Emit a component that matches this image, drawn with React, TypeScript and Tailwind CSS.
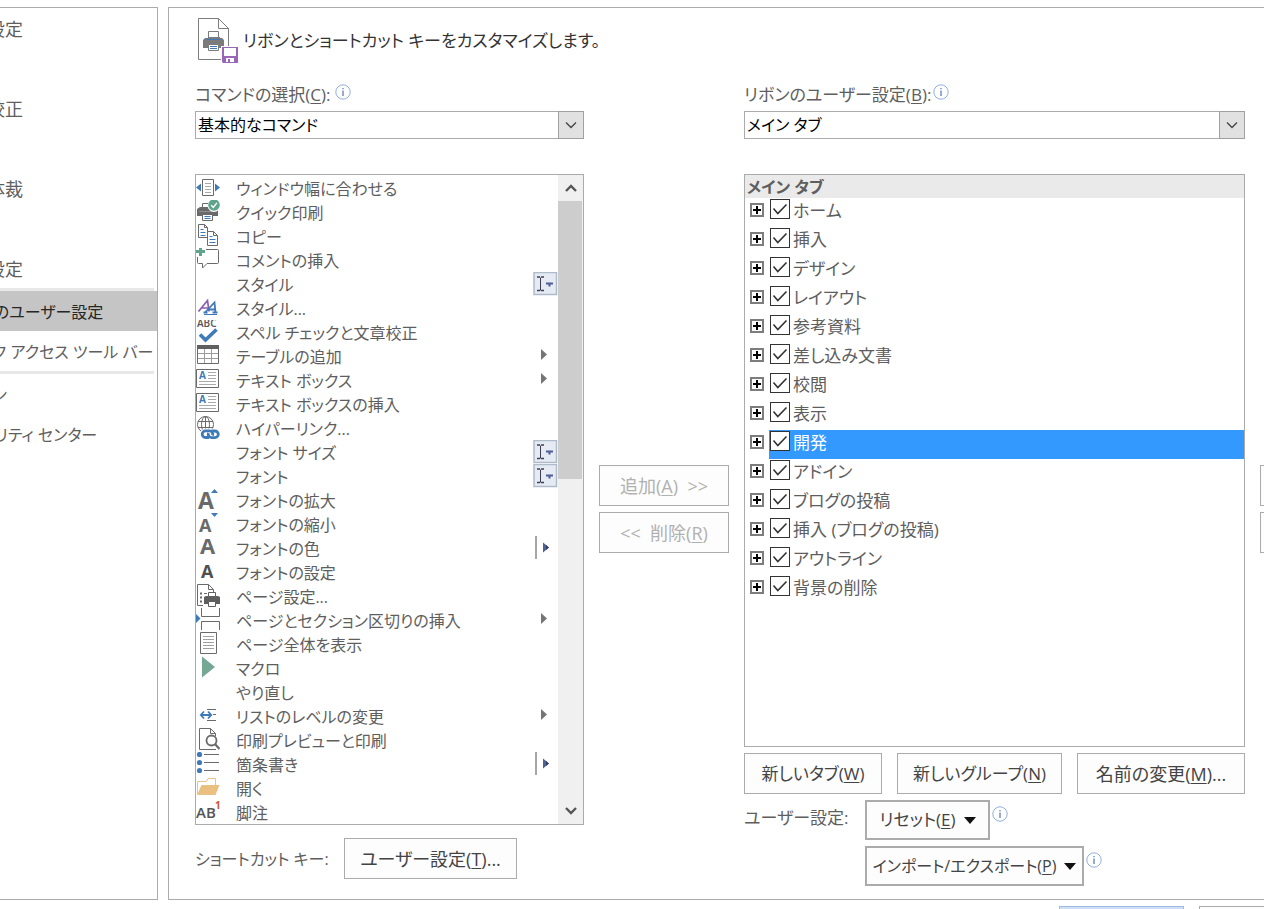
import type { ReactNode } from "react";

const GRAY = "#6a6a6a";
const BLUE = "#3f7ab8";
const GREEN = "#5fa58c";

const icons: Record<string, ReactNode> = {
  fitWidth: (
    <>
      <path d="M6.5 3.5h11v16h-11z" fill="#fff" stroke={GRAY} />
      <path d="M9 7.5h6M9 10.5h6M9 13.5h6M9 16.5h6" stroke="#a9a9a9" />
      <path d="M0 11.5l5-4v8zM24 11.5l-5-4v8z" fill={BLUE} />
    </>
  ),
  quickPrint: (
    <>
      <path d="M6.5 8V3.5h9V8" fill="none" stroke={GRAY} />
      <path d="M1 9l3-2h16l2 2v7H1z" fill={GRAY} />
      <path d="M3 11.5h14" stroke="#8f8f8f" />
      <path d="M6.5 14.5h10v6h-10z" fill="#fff" stroke={GRAY} />
      <path d="M8.5 16.5h6M8.5 18.5h6" stroke={BLUE} />
      <circle cx="18" cy="5.5" r="6.5" fill="#fff" />
      <circle cx="18" cy="5" r="5.8" fill={GREEN} />
      <path d="M15.2 5.2l2.1 2.3 3.6-4.6" fill="none" stroke="#fff" strokeWidth="1.4" />
    </>
  ),
  copy: (
    <>
      <path d="M2.5.5h6l3 3v10h-9z" fill="#fff" stroke={GRAY} />
      <path d="M8.5.5v3h3" fill="none" stroke={GRAY} />
      <path d="M4.500 5.500h3M4.500 8.500h5M4.500 11.500h5" stroke={BLUE} />
      <path d="M11.500 7.500h6l4 4v10h-10z" fill="#fff" stroke={GRAY} />
      <path d="M17.500 7.500v4h4" fill="none" stroke={GRAY} />
      <path d="M13.500 12.500h3M13.500 15.500h6M13.500 18.500h6" stroke={BLUE} />
    </>
  ),
  comment: (
    <>
      <path d="M10 1.500h11.500q1 0 1 1v12q0 1-1 1H11L6.500 20v-4.500h-4q-1 0-1-1V9" fill="none" stroke={GRAY} />
      <path d="M0 3.500h9M4.500 0v8" stroke={GREEN} strokeWidth="3" />
    </>
  ),
  styles: (
    <>
      <path d="M2.500 15.500L11.500 4.500 13 15.500M5.500 12h7" fill="none" stroke="#8a5bb0" strokeWidth="1.700" />
      <path d="M9 16.500L18.500 6.500l1 10M12.500 13.500h7M7.500 16.500h4M16.500 16.500h5" fill="none" stroke={BLUE} strokeWidth="1.800" />
      <path d="M8 18.500h13" stroke={BLUE} />
    </>
  ),
  spelling: (
    <>
      <text x="1" y="7" fontSize="10" fontWeight="600" fill="#555" fontFamily="Open Sans, sans-serif">ABC</text>
      <path d="M4 14.500l5.500 5.500L20.500 9.500" fill="none" stroke={BLUE} strokeWidth="3.600" />
    </>
  ),
  table: (
    <>
      <path d="M1.500 1.500h21v18h-21z" fill="#fff" stroke={GRAY} />
      <path d="M1 1h22v4H1z" fill="#5f5f5f" />
      <path d="M2 9.500h20M2 14.500h20M8.500 5v14M15.500 5v14" stroke="#9c9c9c" />
    </>
  ),
  textBox: (
    <>
      <path d="M.5 1.500h22v18H.5z" fill="#fff" stroke={GRAY} />
      <text x="3" y="11" fontSize="10" fontWeight="700" fill={BLUE} fontFamily="Open Sans, sans-serif">A</text>
      <path d="M12 4.500h8M12 7.500h8M12 10.500h8M3 13.500h17M3 16.500h17" stroke="#a9a9a9" />
    </>
  ),
  link: (
    <>
      <circle cx="9.500" cy="8.500" r="8" fill="#fff" stroke={GRAY} />
      <ellipse cx="9.500" cy="8.500" rx="4" ry="8" fill="none" stroke={GRAY} />
      <path d="M9.500.5v16M2 5.500h15M2 11.500h15" stroke={GRAY} />
      <rect x="4.500" y="12.500" width="19.500" height="11" rx="5" fill="#fff" />
      <path d="M13 21.500H9.500a3.300 3.300 0 010-6.600h4a3.300 3.300 0 013 4.600M15.500 15h3.500a3.300 3.300 0 010 6.600h-3.500a3.300 3.300 0 01-3-4.600" fill="none" stroke={BLUE} strokeWidth="2.800" />
    </>
  ),
  grow: (
    <>
      <text x="2" y="21" fontSize="23" fontWeight="700" fill={GRAY} fontFamily="Open Sans, sans-serif">A</text>
      <path d="M15 5l3.500-4L22 5z" fill={BLUE} />
    </>
  ),
  shrink: (
    <>
      <text x="3" y="20" fontSize="18" fontWeight="700" fill={GRAY} fontFamily="Open Sans, sans-serif">A</text>
      <path d="M15 1h7l-3.500 4z" fill={BLUE} />
    </>
  ),
  fontColor: <text x="4" y="18" fontSize="22" fontWeight="700" fill={GRAY} fontFamily="Open Sans, sans-serif">A</text>,
  font: <text x="5" y="18" fontSize="18" fontWeight="700" fill="#505050" fontFamily="Open Sans, sans-serif">A</text>,
  pageSetup: (
    <>
      <path d="M7 21.500H1.500v-21h11l5 5V9M12.500.5v5h5" fill="none" stroke={GRAY} />
      <path d="M4 9.500h2M4 13.500h2M4 17.500h2" stroke={GRAY} strokeWidth="2" />
      <path d="M8 9.500h3" stroke={GRAY} />
      <path d="M8 13l2-1h12l2 1v7H8z" fill="#5f5f5f" />
      <path d="M12.500 8.500h7v4h-7zM12.500 17.500h7v5h-7z" fill="#fff" stroke="#5f5f5f" />
    </>
  ),
  pageBreak: (
    <>
      <path d="M5.500 0v8.500h18V0M5.500 22v-8.500h18V22" fill="none" stroke={GRAY} />
      <path d="M0 6l4.500 4.500L0 15z" fill={BLUE} />
    </>
  ),
  wholePage: (
    <>
      <path d="M4.500.5h16v21h-16z" fill="#fff" stroke={GRAY} />
      <path d="M7 4.500h11M7 7.500h11M7 10.500h11M7 13.500h11M7 16.500h11" stroke="#a0a0a0" />
    </>
  ),
  macro: <path d="M6 .5L19 11 6 21.500z" fill="#74a794" />,
  listLevel: (
    <>
      <path d="M11 5.500h9M17 10.500h3M11 16.500h9" stroke={GRAY} />
      <path d="M5 11h10M8 7.500L4.800 11 8 14.500M12 7.500l3.200 3.500-3.200 3.500" fill="none" stroke={BLUE} strokeWidth="1.800" />
    </>
  ),
  preview: (
    <>
      <path d="M20 21.500H3.500V.5h11l5 5V8M14.500.5v5h5" fill="none" stroke={GRAY} />
      <circle cx="15.500" cy="12.500" r="5" fill="#fff" stroke={GRAY} strokeWidth="1.800" />
      <path d="M19 16l4.500 5" stroke={GRAY} strokeWidth="2.200" />
    </>
  ),
  bullets: (
    <>
      <circle cx="3.500" cy="2.500" r="2.600" fill={BLUE} />
      <circle cx="3.500" cy="10.500" r="2.600" fill={BLUE} />
      <circle cx="3.500" cy="18.500" r="2.600" fill={BLUE} />
      <path d="M8 2.500h15M8 10.500h15M8 18.500h15" stroke={GRAY} />
    </>
  ),
  open: (
    <>
      <path d="M1.500 18V5.500h9l1.500-3h7.500V9" fill="none" stroke="#e8c48a" />
      <path d="M5.500 9h18L19.500 19H1z" fill="#e9c080" />
    </>
  ),
  footnote: (
    <>
      <text x="0" y="18" fontSize="15" fontWeight="600" fill="#555" fontFamily="Open Sans, sans-serif">AB</text>
      <text x="19" y="9" fontSize="10" fontWeight="700" fill="#d35230" fontFamily="Open Sans, sans-serif">1</text>
    </>
  ),
};

type Marker = "combo" | "menu" | "split";

const commands: { label: string; icon?: string; marker?: Marker }[] = [
  { label: "ウィンドウ幅に合わせる", icon: "fitWidth" },
  { label: "クイック印刷", icon: "quickPrint" },
  { label: "コピー", icon: "copy" },
  { label: "コメントの挿入", icon: "comment" },
  { label: "スタイル", marker: "combo" },
  { label: "スタイル...", icon: "styles" },
  { label: "スペル チェックと文章校正", icon: "spelling" },
  { label: "テーブルの追加", icon: "table", marker: "menu" },
  { label: "テキスト ボックス", icon: "textBox", marker: "menu" },
  { label: "テキスト ボックスの挿入", icon: "textBox" },
  { label: "ハイパーリンク...", icon: "link" },
  { label: "フォント サイズ", marker: "combo" },
  { label: "フォント", marker: "combo" },
  { label: "フォントの拡大", icon: "grow" },
  { label: "フォントの縮小", icon: "shrink" },
  { label: "フォントの色", icon: "fontColor", marker: "split" },
  { label: "フォントの設定", icon: "font" },
  { label: "ページ設定...", icon: "pageSetup" },
  { label: "ページとセクション区切りの挿入", icon: "pageBreak", marker: "menu" },
  { label: "ページ全体を表示", icon: "wholePage" },
  { label: "マクロ", icon: "macro" },
  { label: "やり直し" },
  { label: "リストのレベルの変更", icon: "listLevel", marker: "menu" },
  { label: "印刷プレビューと印刷", icon: "preview" },
  { label: "箇条書き", icon: "bullets", marker: "split" },
  { label: "開く", icon: "open" },
  { label: "脚注", icon: "footnote" },
];

const tabs = [
  "ホーム", "挿入", "デザイン", "レイアウト", "参考資料", "差し込み文書", "校閲", "表示",
  "開発", "アドイン", "ブログの投稿", "挿入 (ブログの投稿)", "アウトライン", "背景の削除",
];

function MarkerIcon({ kind }: { kind: Marker }) {
  return (
    <svg className="h-6 w-[25px] shrink-0" viewBox="0 0 25 24" aria-hidden="true">
      {kind === "combo" && (
        <>
          <path d="M1 .5h22.500v22H1z" fill="#e6ebf3" stroke="#aebbca" strokeWidth="1.500" />
          <path d="M4 5h3M8 5h3M4 18.500h3M8 18.500h3" stroke="#3f3f55" strokeWidth="1.500" />
          <path d="M7.500 5.500v13" stroke="#3f3f55" />
          <path d="M13 10.500h7v2h-2.500v2h-2v-2H13z" fill="#4d5f95" />
        </>
      )}
      {kind === "menu" && <path d="M8 5l6 5.500L8 16z" fill="#757575" />}
      {kind === "split" && (
        <>
          <path d="M3 0v23" stroke="#a5a5a5" strokeWidth="2" />
          <path d="M10 6.500l6 5-6 5z" fill="#4d5f95" />
          <path d="M13 9l3 2.500-3 2.500z" fill="#33405f" />
        </>
      )}
    </svg>
  );
}

function Info() {
  return (
    <svg className="size-4 shrink-0" viewBox="0 0 16 16" aria-hidden="true">
      <circle cx="8" cy="8" r="7.200" fill="#fff" stroke="#8fb0dc" />
      <path d="M8 6.500V12M8 4v1.300" stroke="#4f76b0" strokeWidth="1.200" />
    </svg>
  );
}

function Picker({ id, value }: { id: string; value: string }) {
  return (
    <div className="relative h-7">
      <select id={id} className="h-7 w-full appearance-none border border-[#ababab] bg-white pl-0.5 text-base leading-6 text-black outline-none">
        <option>{value}</option>
      </select>
      <span className="pointer-events-none absolute inset-y-0 right-0 flex w-[26px] items-center justify-center border border-[#a0a0a0] bg-[#e1e1e1]">
        <svg className="h-2 w-3" viewBox="0 0 12 8" aria-hidden="true">
          <path d="M1 1.500l5 5 5-5" fill="none" stroke="#444" strokeWidth="1.300" />
        </svg>
      </span>
    </div>
  );
}

function PushButton({ className, children, disabled }: { className: string; children: ReactNode; disabled?: boolean }) {
  return (
    <button
      type="button"
      disabled={disabled}
      className={`flex items-center justify-center whitespace-nowrap border-[#ababab] bg-[#fdfdfd] text-[#444] disabled:text-[#b1b1b1] ${className}`}
    >
      {children}
    </button>
  );
}

function Key({ children }: { children: string }) {
  return <span className="underline decoration-1 underline-offset-2">{children}</span>;
}

function Caret() {
  return (
    <svg className="ml-2 h-[7px] w-3 shrink-0" viewBox="0 0 12 7" aria-hidden="true">
      <path d="M0 0h12L6 7z" fill="#111" />
    </svg>
  );
}

function NavItem({ children, active, large }: { children?: string; active?: boolean; large?: boolean }) {
  if (!children) return <li className="h-10" />;
  return (
    <li className={`h-10 ${active ? "bg-[#c5c5c5] text-[#262626]" : ""} ${large ? "text-lg" : "text-base"}`}>
      <a href="#" className="flex h-10 items-center whitespace-nowrap pl-0.5 pt-px">{children}</a>
    </li>
  );
}

function Scrollbar() {
  return (
    <div className="flex w-[25px] shrink-0 flex-col bg-[#f0f0f0]" aria-hidden="true">
      <div className="flex h-[26px] items-center justify-center">
        <svg className="h-2.5 w-3" viewBox="0 0 12 10">
          <path d="M1 8l5-5 5 5" fill="none" stroke="#555" strokeWidth="2.400" />
        </svg>
      </div>
      <div className="mr-px h-[278px] bg-[#cdcdcd]" />
      <div className="mt-auto flex h-[26px] items-center justify-center">
        <svg className="h-2.5 w-3" viewBox="0 0 12 10">
          <path d="M1 2l5 5 5-5" fill="none" stroke="#555" strokeWidth="2.400" />
        </svg>
      </div>
    </div>
  );
}

function TitleIcon() {
  return (
    <svg className="h-[46px] w-[41px] shrink-0" viewBox="0 0 41 46" aria-hidden="true">
      <path d="M.5.5h20l10 10v31H.5z" fill="#fff" stroke="#7c7c7c" />
      <path d="M20.500.5v10h10" fill="none" stroke="#7c7c7c" />
      <path d="M5 22l2-2h17l2 2v8H5z" fill="#7b7b7b" />
      <path d="M10 19.500h12" stroke={BLUE} />
      <path d="M10.500 13.500h10v6h-10z" fill="#fff" stroke="#7b7b7b" />
      <path d="M8.500 21.500h14" stroke={BLUE} />
      <path d="M10.500 26.500h10v6h-10z" fill="#fff" stroke="#7b7b7b" />
      <path d="M12 28.500h7M12 30.500h7" stroke={BLUE} />
      <path d="M23 28h18v18H23z" fill="#fff" />
      <path d="M24 29h16v16H25l-1-1z" fill="#9a66b8" />
      <path d="M26 30h12v8H26zM28 40h8v4h-8z" fill="#fff" />
      <path d="M30 41h2v3h-2z" fill="#9a66b8" />
    </svg>
  );
}

export default function App() {
  return (
    <div className="flex h-screen flex-col overflow-hidden bg-white pt-[7px] font-['Open_Sans','Noto_Sans_CJK_JP',sans-serif] text-[17px] leading-6 text-[#5e5e5e] [font-feature-settings:'palt']">
      <div className="flex shrink-0">
        <nav className="w-[158px] shrink-0 overflow-hidden border-y border-r border-[#ababab]">
          <ul className="-ml-[51px]">
            <NavItem large>基本設定</NavItem>
            <NavItem />
            <NavItem large>文章校正</NavItem>
            <NavItem />
            <NavItem large>文字体裁</NavItem>
            <NavItem />
            <NavItem large>詳細設定</NavItem>
            <li className="mr-[3px] h-[3px] bg-[#e8e8e8]" />
            <NavItem active>リボンのユーザー設定</NavItem>
            <NavItem>クイック アクセス ツール バー</NavItem>
            <li className="mr-[3px] h-[3px] bg-[#e8e8e8]" />
            <NavItem>アドイン</NavItem>
            <NavItem>セキュリティ センター</NavItem>
          </ul>
        </nav>

        <main className="ml-2.5 min-w-0 flex-1 border-y border-l border-[#ababab] pb-[13px] pl-[26px]">
          <header className="flex h-[72px] items-start gap-1 pl-[3px] pt-2.5">
            <TitleIcon />
            <h1 className="whitespace-nowrap leading-[46px] text-[#333]">リボンとショートカット キーをカスタマイズします。</h1>
          </header>

          <div className="flex gap-[15px]">
            <section className="flex w-[389px] shrink-0 flex-col">
              <div className="mb-[3px] flex h-7 items-center gap-1">
                <label htmlFor="source" className="pt-px">コマンドの選択(<Key>C</Key>):</label>
                <span className="pb-1"><Info /></span>
              </div>
              <Picker id="source" value="基本的なコマンド" />
              <div className="mt-[35px] flex border border-[#ababab]">
                <ul className="min-w-0 flex-1 pt-px text-base leading-[26px]">
                  {commands.map((c) => (
                    <li key={c.label} className="flex h-6">
                      <svg className="mr-4 size-6 shrink-0" viewBox="0 0 24 24" aria-hidden="true">
                        {c.icon ? icons[c.icon] : null}
                      </svg>
                      <span className="flex-1 whitespace-nowrap">{c.label}</span>
                      {c.marker && <MarkerIcon kind={c.marker} />}
                    </li>
                  ))}
                </ul>
                <Scrollbar />
              </div>
              <div className="mt-[13px] flex items-center">
                <span className="w-[149px] whitespace-nowrap text-base">ショートカット キー:</span>
                <PushButton className="h-[41px] w-[173px] border text-lg">ユーザー設定(<Key>T</Key>)...</PushButton>
              </div>
            </section>

            <div className="flex w-[130px] shrink-0 flex-col gap-1.5 pt-[385px]">
              <PushButton disabled className="h-[41px] border text-lg">追加(<Key>A</Key>)&nbsp; &gt;&gt;</PushButton>
              <PushButton disabled className="h-[41px] border text-lg">&lt;&lt;&nbsp; 削除(<Key>R</Key>)</PushButton>
            </div>

            <section className="min-w-0 flex-1">
              <div className="mb-[3px] flex h-7 items-center gap-0.5">
                <label htmlFor="target" className="pt-px">リボンのユーザー設定(<Key>B</Key>):</label>
                <span className="pb-1"><Info /></span>
              </div>
              <Picker id="target" value="メイン タブ" />
              <div className="mt-[35px] h-[573px] border border-[#ababab]">
                <h2 className="h-[23px] bg-[#eaeaea] pl-0.5 text-base font-bold">メイン タブ</h2>
                <ul>
                  {tabs.map((t) => (
                    <li key={t} className="flex h-[29px]">
                      <button type="button" aria-label={`${t}を展開`} className="flex w-6 shrink-0 pl-[5px] pt-[5px]">
                        <svg className="size-3.5" viewBox="0 0 14 14" aria-hidden="true">
                          <path d="M1 1h12v12H1z" fill="#fff" stroke="#7d7d7d" strokeWidth="2" />
                          <path d="M3 7h8M7 3v8" stroke="#000" strokeWidth="2" />
                        </svg>
                      </button>
                      <label className={`flex flex-1 gap-[3px] pl-px pt-px ${t === "開発" ? "bg-[#3399ff] text-white" : ""}`}>
                        <span className="relative size-5 shrink-0">
                          <input type="checkbox" defaultChecked className="peer block size-5 appearance-none border border-[#333] bg-white" />
                          <svg className="pointer-events-none absolute inset-0 hidden size-5 peer-checked:block" viewBox="0 0 20 20" aria-hidden="true">
                            <path d="M3.500 9.500l4.300 5L16.500 5.500" fill="none" stroke="#333" strokeWidth="1.600" />
                          </svg>
                        </span>
                        <span className="whitespace-nowrap">{t}</span>
                      </label>
                    </li>
                  ))}
                </ul>
              </div>
              <div className="mt-1.5 flex justify-between">
                <PushButton className="h-[41px] w-[138px] border">新しいタブ(<Key>W</Key>)</PushButton>
                <PushButton className="h-[41px] w-[165px] border">新しいグループ(<Key>N</Key>)</PushButton>
                <PushButton className="h-[41px] w-[168px] border text-lg">名前の変更(<Key>M</Key>)...</PushButton>
              </div>
              <div className="mt-1.5 grid grid-cols-[121px_1fr] gap-y-1.5">
                <span className="pt-1.5">ユーザー設定:</span>
                <div className="flex gap-0.5">
                  <PushButton className="h-10 w-[125px] border-2">リセット(<Key>E</Key>)<Caret /></PushButton>
                  <span className="pt-1.5"><Info /></span>
                </div>
                <div className="col-start-2 flex gap-0.5">
                  <PushButton className="h-10 w-[219px] border-2 text-base">インポート/エクスポート(<Key>P</Key>)<Caret /></PushButton>
                  <span className="pt-1.5"><Info /></span>
                </div>
              </div>
            </section>

            <div className="flex w-1 shrink-0 flex-col gap-1.5 overflow-hidden pt-[385px]">
              <button type="button" aria-label="上へ" className="h-[41px] w-10 border border-[#ababab] bg-[#fdfdfd]" />
              <button type="button" aria-label="下へ" className="h-[41px] w-10 border border-[#ababab] bg-[#fdfdfd]" />
            </div>
          </div>
        </main>
      </div>

      <footer className="mt-1.5 flex shrink-0 justify-end gap-[15px]">
        <button type="button" aria-label="OK" className="h-10 w-[125px] border border-[#9dbbe3] bg-[#cfe0f6]" />
        <button type="button" aria-label="キャンセル" className="h-10 w-[65px] border border-r-0 border-[#ababab] bg-[#fdfdfd]" />
      </footer>
    </div>
  );
}
